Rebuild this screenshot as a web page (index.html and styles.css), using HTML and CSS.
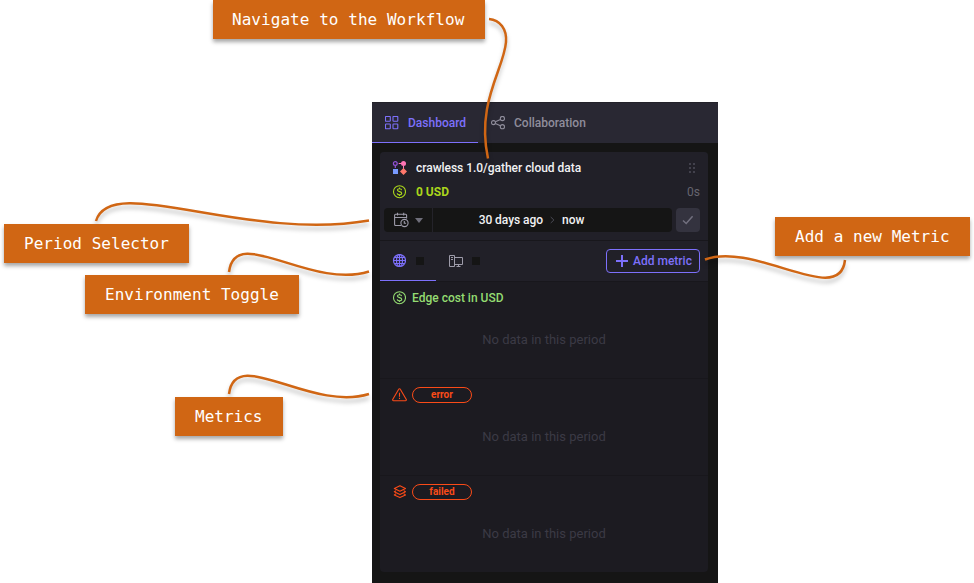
FILE: index.html
```html
<!DOCTYPE html>
<html lang="en">
<head>
<meta charset="utf-8">
<title>Dashboard overview</title>
<link rel="stylesheet" href="styles.css">
</head>
<body>
<main class="canvas">
  <section class="panel">
    <nav class="tabs">
      <div class="tab tab-active">
        <svg class="icon" width="14" height="14" viewBox="0 0 14 14"><g fill="none" stroke="currentColor" stroke-width="1.1"><rect x=".5" y=".5" width="4.8" height="4.8" rx=".6"/><rect x="8" y=".5" width="4.8" height="4.8" rx=".6"/><rect x=".5" y="8" width="4.8" height="4.8" rx=".6"/><rect x="8" y="8" width="4.8" height="4.8" rx=".6"/></g></svg>
        <span>Dashboard</span>
      </div>
      <div class="tab">
        <svg class="icon" width="15" height="14" viewBox="0 0 15 14"><g fill="none" stroke="currentColor" stroke-width="1.1"><circle cx="2.5" cy="6.6" r="2"/><circle cx="11.4" cy="2.5" r="2.1"/><circle cx="11.4" cy="10.7" r="2.1"/><path d="M4.4 5.7 9.4 3.4M4.4 7.5l5 2.3"/></g></svg>
        <span>Collaboration</span>
      </div>
    </nav>
    <article class="card">
      <header class="summary">
        <div class="row title-row">
          <svg class="icon" width="16" height="16" viewBox="0 0 16 16"><circle cx="3.3" cy="3.5" r="1.9" fill="none" stroke="#9252d8" stroke-width="1.2"/><path d="M3.3 5.4V8" stroke="#9252d8" stroke-width="1.2"/><path d="M6.7 3.5H10" stroke="#ff75b5" stroke-width="1.2"/><circle cx="11.5" cy="3.5" r="2.5" fill="#ff75b5"/><path d="M11.5 6v3" stroke="#ff75b5" stroke-width="1"/><rect x="1" y="9" width="5" height="5" fill="#789aff"/><path d="m11.5 8 3.5 3.6-3.5 3.5L8 11.6z" fill="#ff786c"/></svg>
          <h1 class="title">crawless 1.0/gather cloud data</h1>
          <svg class="drag" width="8" height="12" viewBox="0 0 8 12" fill="#42414c"><path d="M1 1h2v2H1zM5 1h2v2H5zM1 5h2v2H1zM5 5h2v2H5zM1 9h2v2H1zM5 9h2v2H5z"/></svg>
        </div>
        <div class="row cost-row">
          <svg class="icon" width="14" height="14" viewBox="0 0 14 14"><g fill="none" stroke="currentColor" stroke-width="1.1"><circle cx="7.5" cy="6.7" r="6"/><path d="M9.6 5.1C9.5 3.9 8.6 3.7 7.5 3.7s-2.1.4-2.1 1.4C5.4 7.1 9.7 6.1 9.7 8.2 9.7 9.3 8.7 9.7 7.5 9.7S5.3 9.2 5.3 8.2M7.5 2.4v1.5M7.5 9.5V11"/></g></svg>
          <span class="cost">0 USD</span>
          <span class="duration">0s</span>
        </div>
        <div class="period">
          <div class="period-box">
            <div class="period-menu">
              <svg width="16" height="16" viewBox="0 0 16 16"><g fill="none" stroke="#9d9ba9" stroke-width="1.1"><path d="M8 13.500H2.600a1 1 0 0 1-1-1V3.300a1 1 0 0 1 1-1h10a1 1 0 0 1 1 1V6.500M1.600 5.500h12M4.500.8v2.700M10.700.8v2.700"/><circle cx="11.500" cy="11" r="3.600"/><path d="M11.300 9v2.200h1.800"/></g></svg>
              <svg width="8" height="5" viewBox="0 0 8 5"><path d="M0 0h8L4 5z" fill="#6f6e7a"/></svg>
            </div>
            <div class="period-value"><span class="from">30 days ago</span><svg width="5" height="8" viewBox="0 0 5 8"><path d="M.7 1 3.900 4 .7 7" fill="none" stroke="#4b4b55"/></svg><span>now</span></div>
          </div>
          <div class="apply"><svg width="12" height="10" viewBox="0 0 12 10"><path d="m1 5.500 3.200 3L10.600 1.300" fill="none" stroke="#72707f" stroke-width="1.500"/></svg></div>
        </div>
      </header>
      <div class="toggle">
        <div class="env env-active">
          <svg class="icon" width="14" height="14" viewBox="0 0 14 14"><g fill="none" stroke="currentColor" stroke-width="1.200"><circle cx="7.500" cy="6.500" r="6"/><ellipse cx="7.500" cy="6.500" rx="3" ry="6"/><path d="M7.500.5v12M1.500 6.500h12M2.300 3.500h10.400M2.300 9.500h10.400"/></g></svg>
          <i class="count"></i>
        </div>
        <div class="env">
          <svg class="icon" width="16" height="14" viewBox="0 0 16 14"><g fill="none" stroke="#9d9ba9"><path d="M6.500 12.500H1.500V1.500h5v11M3 3.500h2M3 5.500h2M6.500 3.500h8v7h-8M10.500 10.500v2M8.500 12.500h4"/></g></svg>
          <i class="count"></i>
        </div>
        <button class="add"><svg width="12" height="12" viewBox="0 0 12 12"><path d="M6 0v12M0 6h12" stroke="currentColor" stroke-width="2"/></svg><span>Add metric</span></button>
      </div>
      <section class="metric">
        <div class="metric-head green">
          <svg class="icon" width="14" height="14" viewBox="0 0 14 14"><g fill="none" stroke="currentColor" stroke-width="1.100"><circle cx="7.500" cy="6.700" r="6"/><path d="M9.600 5.100C9.500 3.900 8.600 3.700 7.500 3.700s-2.100.4-2.100 1.400C5.400 7.100 9.700 6.100 9.700 8.200 9.700 9.300 8.700 9.700 7.500 9.700S5.300 9.200 5.300 8.200M7.500 2.400v1.500M7.500 9.500V11"/></g></svg>
          <h2>Edge cost in USD</h2>
        </div>
        <p class="empty">No data in this period</p>
      </section>
      <section class="metric">
        <div class="metric-head red">
          <svg class="icon icon-wide" width="16" height="14" viewBox="0 0 16 14"><path d="M7.700 1.200a.9.9 0 0 1 1.600 0l6 10.200a.9.9 0 0 1-.8 1.300H2.500a.9.9 0 0 1-.8-1.300z" fill="none" stroke="currentColor" stroke-width="1.100"/><path d="M8.500 4.700v4M8.500 9.800v1.300" stroke="currentColor" stroke-width="1.100"/></svg>
          <span class="pill">error</span>
        </div>
        <p class="empty">No data in this period</p>
      </section>
      <section class="metric">
        <div class="metric-head red">
          <svg class="icon" width="14" height="14" viewBox="0 0 14 14"><path d="m7.900.8 5.600 2.700-5.600 2.700-5.600-2.700zM4.100 5.600 2.300 6.700l5.600 2.700 5.600-2.700L11.700 5.600M4.100 8.800 2.300 9.900l5.600 2.700 5.600-2.700L11.700 8.800" fill="none" stroke="currentColor" stroke-width="1.100" stroke-linejoin="round"/></svg>
          <span class="pill">failed</span>
        </div>
        <p class="empty">No data in this period</p>
      </section>
    </article>
  </section>

  <svg class="links" width="974" height="583" viewBox="0 0 974 583">
    <g fill="none" stroke="#d06614" stroke-width="2.500">
      <path d="M489 19C500 20 507 29 506 42C504 69 476 103 488 158.500"/>
      <path d="M96 221C110 172 245 242 369 220.500"/>
      <path d="M229 272C235 223 310 290 369 271.500"/>
      <path d="M229 394C235 345 310 412 369 394"/>
      <path d="M705 259.500C755 241 840 308 845 260"/>
    </g>
  </svg>
  <div class="note note-workflow">Navigate to the Workflow</div>
  <div class="note note-period">Period Selector</div>
  <div class="note note-env">Environment Toggle</div>
  <div class="note note-metrics">Metrics</div>
  <div class="note note-add">Add a new Metric</div>
</main>
</body>
</html>
```
FILE: styles.css
```css
* { box-sizing: border-box; }
body { margin: 0; background: #fff; font-family: Roboto, "Liberation Sans", sans-serif; font-size: 12px; font-weight: 500; }
h1, h2, p { margin: 0; font: inherit; }
svg { display: block; flex: none; }
.canvas { position: relative; width: 974px; height: 583px; padding: 102px 0 0 372px; overflow: hidden; }
.panel { width: 346px; height: 481px; background: #151515; }
.tabs { display: flex; height: 41px; background: #292833; border-top: 1px solid #23222a; }
.tab { display: flex; align-items: center; gap: 8px; padding: 0 12px 0 13px; color: #8f8d9b; }
.tab-active { width: 106px; padding-right: 0; gap: 9px; color: #7d70fb; border-bottom: 1px solid #7d70fb; }
.card { display: flex; flex-direction: column; width: 328px; height: 420px; margin: 9px 0 0 8px; border-radius: 4px; overflow: hidden; background: #1c1b21; }
.summary { height: 88px; padding: 4px 8px 0 4px; background: #212028; }
.row { display: flex; align-items: center; height: 24px; padding-left: 8px; }
.title-row { gap: 8px; color: #f1f1f3; }
.title { letter-spacing: -.03px; }
.drag { margin: 0 4px 0 auto; }
.cost-row { gap: 10px; color: #aad51c; }
.cost { font-weight: 700; }
.duration { margin-left: auto; color: #66656f; font-weight: 400; }
.period { display: flex; gap: 4px; height: 24px; margin-top: 4px; }
.period-box { display: flex; flex: 1; background: #151515; border-radius: 4px; }
.period-menu { display: flex; align-items: center; gap: 6px; width: 49px; padding-left: 9px; border-right: 1px solid #24232a; }
.period-value { display: flex; flex: 1; align-items: center; justify-content: center; gap: 7px; padding-right: 42px; color: #f1f1f3; white-space: nowrap; }
.from { letter-spacing: -.05px; }
.apply { display: grid; place-items: center; width: 24px; border-radius: 4px; background: #34333f; }
.toggle { display: flex; height: 41px; border-top: 1px solid #18171c; background: #212028; }
.env { display: flex; align-items: center; gap: 10px; width: 56px; padding-left: 12px; }
.env-active { color: #7d70fb; border-bottom: 1px solid #7d70fb; }
.count { width: 8px; height: 8px; background: #151515; }
.env:not(.env-active) .count { margin-left: -2px; }
.add { display: flex; align-items: center; gap: 5px; width: 94px; height: 24px; margin: 8px 8px 0 auto; padding: 0 0 0 9px; border: 1px solid #7d70fb; border-radius: 4px; background: transparent; color: #7d70fb; font: 500 12px Roboto, sans-serif; white-space: nowrap; }
.metric { height: 97px; border-top: 1px solid #18171c; }
.metric-head { display: flex; align-items: center; gap: 6px; height: 32px; padding-left: 12px; }
.green { color: #94dc72; }
.red { color: #fa4b18; }
.icon-wide { margin: 0 -1px; }
.pill { width: 60px; height: 16px; border: 1px solid currentColor; border-radius: 8px; text-align: center; font-size: 10px; line-height: 14px; font-weight: 700; }
.empty { padding-top: 17px; line-height: 17px; text-align: center; color: #3b3a45; font-size: 13px; font-weight: 400; }
.links { position: absolute; inset: 0; filter: drop-shadow(0 4px 2px rgba(0, 0, 0, .25)); }
.note { position: absolute; height: 39px; padding: 0 20px; background: #d06614; color: #fff; font: 16px/39px "DejaVu Sans Mono", monospace; white-space: nowrap; box-shadow: 0 3px 4px rgba(0, 0, 0, .35); }
.note-workflow { left: 213px; top: 0; width: 272px; padding-left: 19px; letter-spacing: .05px; }
.note-period { left: 4px; top: 224px; width: 185px; letter-spacing: .03px; }
.note-env { left: 85px; top: 275px; width: 214px; letter-spacing: .03px; }
.note-metrics { left: 175px; top: 397px; width: 108px; }
.note-add { left: 775px; top: 217px; width: 195px; letter-spacing: .03px; }
```
